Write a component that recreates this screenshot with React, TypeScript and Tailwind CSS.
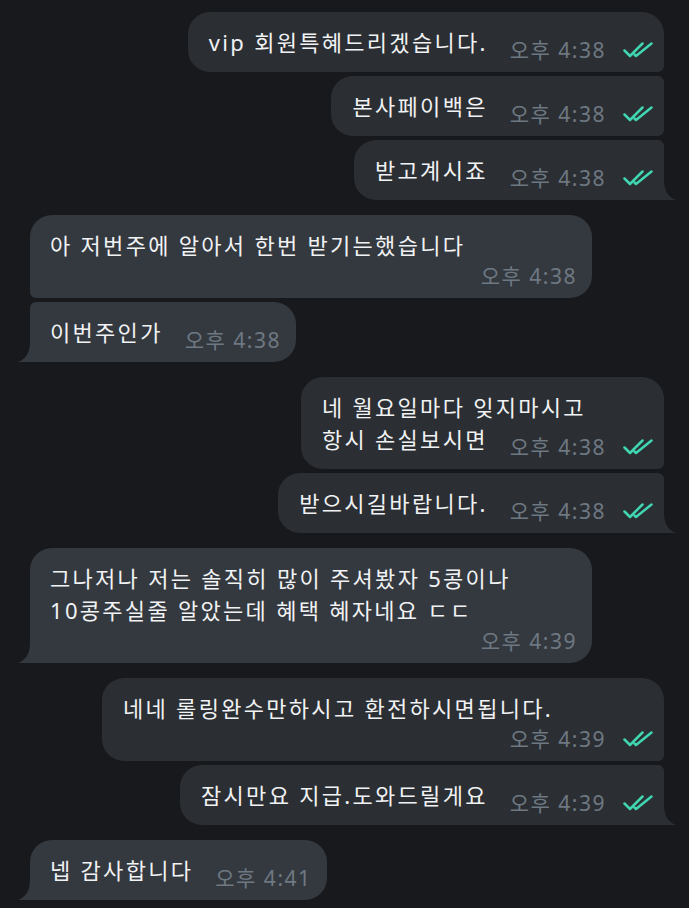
type Side = "out" | "in";
type Pos = "first" | "middle" | "last" | "single";

type Msg = {
    text: string;
    time: string;
    pos: Pos;
    below?: boolean;
};

type Group = { side: Side; msgs: Msg[] };

const groups: Group[] = [
    {
        side: "out",
        msgs: [
            { text: "vip 회원특혜드리겠습니다.", time: "오후 4:38", pos: "first" },
            { text: "본사페이백은", time: "오후 4:38", pos: "middle" },
            { text: "받고계시죠", time: "오후 4:38", pos: "last" },
        ],
    },
    {
        side: "in",
        msgs: [
            { text: "아 저번주에 알아서 한번 받기는했습니다", time: "오후 4:38", pos: "first", below: true },
            { text: "이번주인가", time: "오후 4:38", pos: "last" },
        ],
    },
    {
        side: "out",
        msgs: [
            { text: "네 월요일마다 잊지마시고\n항시 손실보시면", time: "오후 4:38", pos: "first" },
            { text: "받으시길바랍니다.", time: "오후 4:38", pos: "last" },
        ],
    },
    {
        side: "in",
        msgs: [
            {
                text: "그나저나 저는 솔직히 많이 주셔봤자 5콩이나\n10콩주실줄 알았는데 혜택 혜자네요 ㄷㄷ",
                time: "오후 4:39",
                pos: "single",
                below: true,
            },
        ],
    },
    {
        side: "out",
        msgs: [
            { text: "네네 롤링완수만하시고 환전하시면됩니다.", time: "오후 4:39", pos: "first", below: true },
            { text: "잠시만요 지급.도와드릴게요", time: "오후 4:39", pos: "last" },
        ],
    },
    {
        side: "in",
        msgs: [{ text: "넵 감사합니다", time: "오후 4:41", pos: "single" }],
    },
];

function Checks() {
    return (
        <svg width="30" height="16" viewBox="0 0 30 16" fill="none" stroke="#3fd6b1" strokeWidth="2.5" strokeLinecap="round" strokeLinejoin="round">
            <path d="M1.5 8.5 L7 14 L19.5 1.5" />
            <path d="M11.5 12.5 L13 14 L28.5 1.5" />
        </svg>
    );
}

function Tail({ side }: { side: Side }) {
    if (side === "out") {
        return (
            <svg className="absolute bottom-0 right-[-12px]" width="12" height="20" viewBox="0 0 12 20">
                <path d="M0 0 C0 10 4 17 12 20 L0 20 Z" fill="#2b2f33" />
            </svg>
        );
    }
    return (
        <svg className="absolute bottom-0 left-[-12px]" width="12" height="20" viewBox="0 0 12 20">
            <path d="M12 0 C12 10 8 17 0 20 L12 20 Z" fill="#34393f" />
        </svg>
    );
}

const lineCls = "whitespace-pre text-[22px] leading-[32px] tracking-[2.3px] text-[#f1f2f4]";

function Bubble({ side, msg }: { side: Side; msg: Msg }) {
    const top = msg.pos === "first" || msg.pos === "single";
    const tail = msg.pos === "last" || msg.pos === "single";
    const lines = msg.text.split("\n");

    const corners =
        side === "out"
            ? `bg-[#2b2f33] pl-[21px] pr-[11px] rounded-tl-[22px] rounded-bl-[22px] ${top ? "rounded-tr-[22px]" : "rounded-tr-[6px]"} ${tail ? "rounded-br-none" : "rounded-br-[6px]"}`
            : `bg-[#34393f] pl-[20px] pr-[15px] rounded-tr-[22px] rounded-br-[22px] ${top ? "rounded-tl-[22px]" : "rounded-tl-[6px]"} ${tail ? "rounded-bl-none" : "rounded-bl-[6px]"}`;

    const meta = (
        <div className={`flex h-[22px] shrink-0 items-center gap-[17px] ${msg.below ? "mt-[4px] self-end" : "ml-[22px] -mb-[3px]"}`}>
            <span className="text-[21px] leading-[22px] tracking-[1.5px] text-[#6e7882]">{msg.time}</span>
            {side === "out" && <Checks />}
        </div>
    );

    if (msg.below) {
        return (
            <div className={`relative flex w-[562px] flex-col pt-[14px] pb-[11px] ${corners}`}>
                {lines.map((l, i) => (
                    <p key={i} className={lineCls}>
                        {l}
                    </p>
                ))}
                {meta}
                {tail && <Tail side={side} />}
            </div>
        );
    }

    // time sits only beside the last line, earlier lines may run over it
    return (
        <div className={`relative flex flex-col py-[14px] ${corners}`}>
            {lines.slice(0, -1).map((l, i) => (
                <p key={i} className={lineCls}>
                    {l}
                </p>
            ))}
            <div className="flex items-end">
                <p className={lineCls}>{lines[lines.length - 1]}</p>
                {meta}
            </div>
            {tail && <Tail side={side} />}
        </div>
    );
}

export default function App() {
    return (
        <div className="min-h-screen bg-[#18191d] pt-[12px] pb-2 pl-[30px] pr-[25px] font-['Noto_Sans','Noto_Sans_CJK_KR',sans-serif]">
            <div className="flex flex-col gap-[15px]">
                {groups.map((g, i) => (
                    <div key={i} className={`flex flex-col gap-[4px] ${g.side === "out" ? "items-end" : "items-start"}`}>
                        {g.msgs.map((m, j) => (
                            <Bubble key={j} side={g.side} msg={m} />
                        ))}
                    </div>
                ))}
            </div>
        </div>
    );
}
